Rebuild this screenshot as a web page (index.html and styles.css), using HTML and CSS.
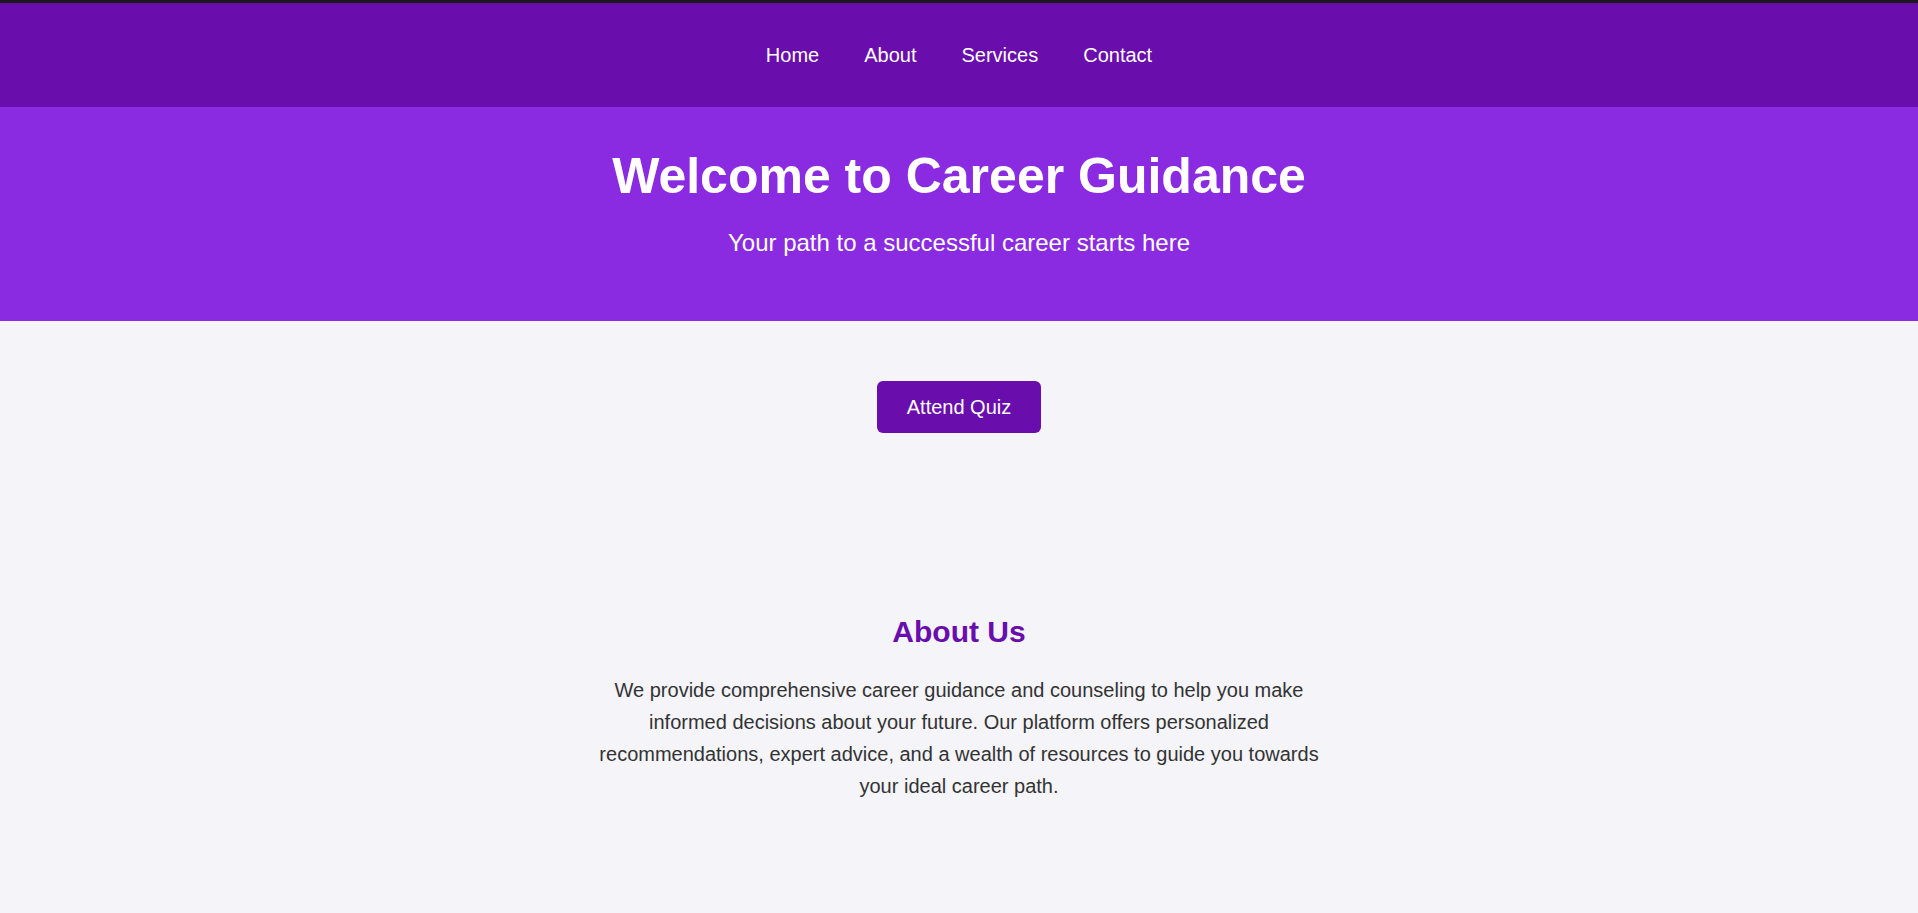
FILE: index.html
```html
<!DOCTYPE html>
<html lang="en">
<head>
<meta charset="utf-8">
<title>Career Guidance</title>
<link rel="stylesheet" href="styles.css">
</head>
<body>
<div class="topline"></div>
<header class="site-header">
  <nav class="nav">
    <a href="#" class="nav-link">Home</a>
    <a href="#" class="nav-link">About</a>
    <a href="#" class="nav-link">Services</a>
    <a href="#" class="nav-link">Contact</a>
  </nav>
</header>
<section class="hero">
  <h1 class="hero-title">Welcome to Career Guidance</h1>
  <p class="hero-sub">Your path to a successful career starts here</p>
</section>
<div class="quiz">
  <a href="#" class="quiz-btn">Attend Quiz</a>
</div>
<section class="about">
  <h2 class="about-title">About Us</h2>
  <p class="about-text">We provide comprehensive career guidance and counseling to help you make informed decisions about your future. Our platform offers personalized recommendations, expert advice, and a wealth of resources to guide you towards your ideal career path.</p>
</section>
</body>
</html>
```

FILE: styles.css
```css
html, body {
  margin: 0;
  padding: 0;
}
body {
  background: #f4f4f9;
  font-family: "Liberation Sans", Arial, sans-serif;
  color: #333;
  overflow: hidden;
}
.topline {
  height: 3px;
  background: #1c1a1e;
}
.site-header {
  background: #6a0dad;
  height: 104px;
  display: flex;
  align-items: center;
  justify-content: center;
}
.nav {
  display: flex;
  gap: 45px;
}
.nav-link {
  color: #fff;
  text-decoration: none;
  font-size: 20px;
}
.hero {
  background: #8a2be2;
  color: #fff;
  text-align: center;
  padding: 40px 20px 40px;
}
.hero-title {
  font-size: 50px;
  font-weight: bold;
  margin: 0;
}
.hero-sub {
  font-size: 24px;
  margin: 24px 0 24px;
}
.quiz {
  display: flex;
  justify-content: center;
  padding-top: 60px;
}
.quiz-btn {
  background: #6a0dad;
  color: #fff;
  text-decoration: none;
  font-size: 20px;
  padding: 15px 30px 14px;
  border-radius: 6px;
}
.about {
  max-width: 750px;
  margin: 0 auto;
  text-align: center;
  padding-top: 157px;
}
.about-title {
  color: #6a0dad;
  font-size: 30px;
  margin: 25px 0 25px;
}
.about-text {
  font-size: 20px;
  line-height: 32px;
  margin: 0;
}
```
